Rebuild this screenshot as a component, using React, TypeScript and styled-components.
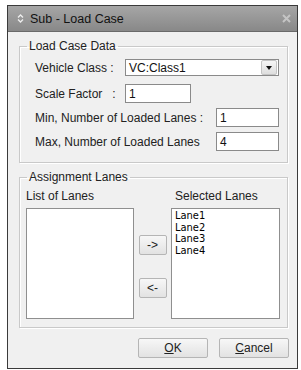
import React from 'react';
import styled, { createGlobalStyle } from 'styled-components';

const GlobalStyle = createGlobalStyle`
  body {
    margin: 0;
    background: #ffffff;
    font-family: "Liberation Sans", Arial, sans-serif;
  }
`;

const Window = styled.div`
  box-sizing: border-box;
  margin: 5px 0 0 7px;
  width: 291px;
  height: 364px;
  border: 1px solid #3a3a3a;
  background: #f0f0f0;
  display: flex;
  flex-direction: column;
`;

const TitleBar = styled.div`
  height: 26px;
  display: flex;
  align-items: center;
  padding: 0 0 0 9px;
  background: linear-gradient(#a6a6a6, #888888);
  border-bottom: 1px solid #6a6a6a;
  box-sizing: border-box;
`;

const Title = styled.span`
  margin-left: 6px;
  font-size: 12.5px;
  color: #111;
  flex: 1;
`;

const CloseIcon = styled.svg`
  margin-right: 6px;
`;

const Body = styled.div`
  flex: 1;
  padding: 7px 8px 10px 11px;
  display: flex;
  flex-direction: column;
`;

const Group = styled.fieldset<{ $top?: number; $pad: string }>`
  margin: ${({ $top }) => $top || 0}px 0 0 0;
  padding: ${({ $pad }) => $pad};
  width: 269px;
  box-sizing: border-box;
  border: 1px solid #c9c9c9;
  box-shadow: 1px 1px 0 #ffffff, inset 1px 1px 0 #ffffff;
  min-width: 0;
`;

// legend sits inside the fieldset's left padding, so the offset is per group
const Legend = styled.legend<{ $offset: number }>`
  margin-left: ${({ $offset }) => $offset}px;
  padding: 0 2px;
  font-size: 12px;
  line-height: 14px;
  color: #222;
`;

const Row = styled.div<{ $gap: number }>`
  display: flex;
  align-items: center;
  margin-top: ${({ $gap }) => $gap}px;
`;

const Label = styled.span<{ $w: number }>`
  width: ${({ $w }) => $w}px;
  font-size: 12px;
  color: #222;
  white-space: pre;
`;

const TextBox = styled.div<{ $w: number; $h: number }>`
  box-sizing: border-box;
  width: ${({ $w }) => $w}px;
  height: ${({ $h }) => $h}px;
  border: 1px solid #8a8a8a;
  background: #fff;
  font-size: 12px;
  color: #111;
  padding-left: 3px;
  display: flex;
  align-items: center;
`;

const Combo = styled(TextBox)`
  justify-content: space-between;
  padding-right: 1px;
`;

const DropButton = styled.div`
  width: 14px;
  height: 13px;
  border: 1px solid #c4c4c4;
  border-radius: 2px;
  background: linear-gradient(#f6f6f6, #dedede);
  display: flex;
  align-items: center;
  justify-content: center;
`;

const LanesGrid = styled.div`
  display: grid;
  grid-template-columns: 108px 28px 109px;
  column-gap: 4.5px;
`;

const ColLabel = styled.span<{ $indent?: number }>`
  font-size: 12px;
  line-height: 14px;
  color: #222;
  padding-left: ${({ $indent }) => $indent || 0}px;
  margin-bottom: 5px;
`;

const ListBox = styled.div`
  box-sizing: border-box;
  height: 111px;
  border: 1px solid #8f8f8f;
  background: #fff;
  padding: 1px 0 0 3px;
`;

const ListItem = styled.div`
  font-family: "DejaVu Sans Condensed", "Liberation Sans", sans-serif;
  font-size: 11px;
  line-height: 11.5px;
  color: #000;
`;

const MoveColumn = styled.div`
  display: flex;
  flex-direction: column;
  padding-top: 27px;
  gap: 23px;
`;

const SmallButton = styled.button<{ $w: number }>`
  box-sizing: border-box;
  width: ${({ $w }) => $w}px;
  height: 20px;
  padding: 0;
  border: 1px solid #b5b5b5;
  border-radius: 2px;
  background: linear-gradient(#f7f7f7, #e2e2e2);
  font-family: "Liberation Sans", Arial, sans-serif;
  font-size: 12px;
  color: #222;
`;

const Footer = styled.div`
  display: flex;
  justify-content: flex-end;
  gap: 11px;
  margin-top: 10px;
`;

const Mnemonic = styled.span`
  text-decoration: underline;
`;

const App: React.FC = () => {
  const lanes = ['Lane1', 'Lane2', 'Lane3', 'Lane4'];

  return (
    <>
      <GlobalStyle />
      <Window>
        <TitleBar>
          <svg width="7" height="9" viewBox="0 0 7 9">
            <path d="M1 3.5 L3.5 1 L6 3.5 M1 5.5 L3.5 8 L6 5.5" fill="none" stroke="#eeeeee" strokeWidth="1.3" />
          </svg>
          <Title>Sub - Load Case</Title>
          <CloseIcon width="9" height="9" viewBox="0 0 9 9">
            <path d="M1 1 L8 8 M8 1 L1 8" stroke="#c4c4c4" strokeWidth="2" />
          </CloseIcon>
        </TitleBar>
        <Body>
          <Group $pad="0 8px 11px 15px">
            <Legend $offset={-8}>Load Case Data</Legend>
            <Row $gap={6}>
              <Label $w={90}>Vehicle Class :</Label>
              <Combo $w={154} $h={17}>
                VC:Class1
                <DropButton>
                  <svg width="6" height="4" viewBox="0 0 6 4">
                    <path d="M0 0 L6 0 L3 4 Z" fill="#111" />
                  </svg>
                </DropButton>
              </Combo>
            </Row>
            <Row $gap={8}>
              <Label $w={90}>{'Scale Factor   :'}</Label>
              <TextBox $w={66} $h={19}>1</TextBox>
            </Row>
            <Row $gap={5}>
              <Label $w={181}>Min, Number of Loaded Lanes :</Label>
              <TextBox $w={63} $h={19}>1</TextBox>
            </Row>
            <Row $gap={5}>
              <Label $w={181}>Max, Number of Loaded Lanes</Label>
              <TextBox $w={63} $h={19}>4</TextBox>
            </Row>
          </Group>
          <Group $top={7} $pad="5px 7px 8px 6px">
            <Legend $offset={1}>Assignment Lanes</Legend>
            <LanesGrid>
              <ColLabel>List of Lanes</ColLabel>
              <span />
              <ColLabel $indent={4}>Selected Lanes</ColLabel>
              <ListBox />
              <MoveColumn>
                <SmallButton $w={28}>-&gt;</SmallButton>
                <SmallButton $w={28}>&lt;-</SmallButton>
              </MoveColumn>
              <ListBox>
                {lanes.map(l => (
                  <ListItem key={l}>{l}</ListItem>
                ))}
              </ListBox>
            </LanesGrid>
          </Group>
          <Footer>
            <SmallButton $w={70}>
              <Mnemonic>O</Mnemonic>K
            </SmallButton>
            <SmallButton $w={70}>
              <Mnemonic>C</Mnemonic>ancel
            </SmallButton>
          </Footer>
        </Body>
      </Window>
    </>
  );
};

export default App;
